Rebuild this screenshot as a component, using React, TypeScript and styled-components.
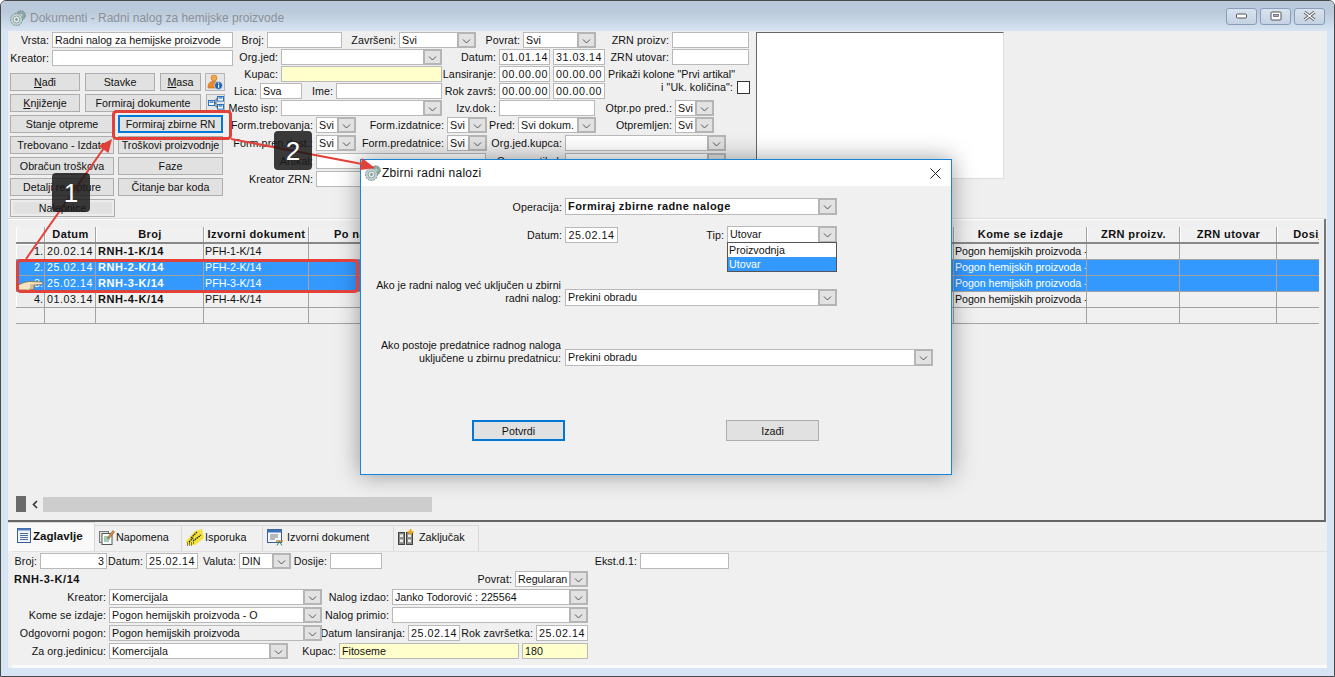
import React from 'react';
import styled, { createGlobalStyle } from 'styled-components';

const Global = createGlobalStyle`
  html, body { margin: 0; padding: 0; background: #fff; }
  body { font-family: "Liberation Sans", Arial, sans-serif; font-size: 10.7px; color: #111; }
`;

const Win = styled.div`
  position: relative; width: 1335px; height: 677px; box-sizing: border-box; overflow: hidden;
  border: 1px solid #4a4a4a; border-radius: 6px 6px 0 0;
  background: #d6e4f3; display: flex; flex-direction: column;
`;
const TitleBar = styled.div`
  height: 30px; flex: none; display: flex; align-items: center; padding: 4px 9px 0 9px; box-sizing: border-box;
  background: linear-gradient(#b9c9da, #bccbdb 40%, #d6e4f3);
`;
const TitleText = styled.span`
  margin-left: 4px; font-size: 12px; color: #8b9098;
`;
const WinBtns = styled.div`margin-left: auto; display: flex; gap: 3px; margin-top: -4px;`;
const WinBtn = styled.div`
  width: 31px; height: 17px; box-sizing: border-box; border: 1px solid #8a9cb8; border-radius: 3px;
  background: linear-gradient(#d9e3ef, #c4d2e3); display: flex; align-items: center; justify-content: center;
`;
const Body = styled.div`
  flex: 1; margin: 0 7px 8px 7px; display: flex; flex-direction: column; background: #efefef; min-height: 0;
`;
const Filters = styled.div`height: 187px; flex: none; display: flex; box-sizing: border-box; padding-top: 1px;`;
const LeftCol = styled.div`width: 220px; flex: none; display: flex; flex-direction: column;`;
const MidCol = styled.div`width: 528px; flex: none; display: flex; flex-direction: column;`;
const Row = styled.div<{ $mt?: number; $h?: number; $end?: boolean }>`
  display: flex; align-items: ${p => (p.$end ? 'flex-end' : 'center')}; height: ${p => p.$h ?? 16}px; flex: none;
  margin-top: ${p => p.$mt ?? 0}px;
`;
const Lbl = styled.div<{ $w: number; $left?: boolean; $lift?: number }>`
  width: ${p => p.$w}px; flex: none; box-sizing: border-box; white-space: nowrap;
  padding-right: ${p => (p.$left ? 0 : 3)}px;
  display: flex; justify-content: ${p => (p.$left ? 'flex-start' : 'flex-end')};
  margin-top: ${p => (p.$lift ? -p.$lift : 0)}px; letter-spacing: ${p => (p.$left ? 0 : 0.08)}px;
`;
const Field = styled.div<{ $w: number; $bg?: string; $right?: boolean; $date?: boolean }>`
  width: ${p => p.$w}px; height: 16px; flex: none; box-sizing: border-box; border: 1px solid #b9b9b9;
  background: ${p => p.$bg ?? '#fff'}; padding: 0 2px; line-height: 14px; white-space: nowrap; overflow: hidden;
  text-align: ${p => (p.$right ? 'right' : p.$date ? 'center' : 'left')};
  letter-spacing: ${p => (p.$date ? '0.55px' : '0')};
`;
const Gap = styled.div<{ $w: number }>`width: ${p => p.$w}px; flex: none;`;
const ComboBox = styled.div<{ $w: number; $h?: number; $bg?: string; $bold?: boolean }>`
  position: relative; width: ${p => p.$w}px; height: ${p => p.$h ?? 16}px; flex: none; box-sizing: border-box;
  display: flex; border: 1px solid #b9b9b9; background: ${p => p.$bg ?? '#fff'};
  font-weight: ${p => (p.$bold ? 700 : 400)}; font-size: ${p => (p.$bold ? 11 : 10.7)}px;
  letter-spacing: ${p => (p.$bold ? 0.42 : 0)}px;
`;
const ComboText = styled.div`flex: 1; min-width: 0; padding: 0 2px; white-space: nowrap; overflow: hidden; line-height: 14px;`;
const ComboBtn = styled.div`
  width: 19px; flex: none; margin: -1px; box-sizing: border-box; border: 2px solid #b5b5b5; background: #e2e2e2;
  display: flex; align-items: center; justify-content: center; padding-top: 2px;
`;
const Popup = styled.div`
  position: absolute; left: -1px; right: -1px; top: 100%; background: #fff; border: 1px solid #555;
  box-sizing: border-box; height: 30px; z-index: 2;
`;
const PopItem = styled.div<{ $sel?: boolean }>`
  height: 14px; line-height: 14px; padding: 0 1px; background: ${p => (p.$sel ? '#3399ff' : '#fff')};
  color: ${p => (p.$sel ? '#fff' : '#111')};
`;
const BtnArea = styled.div`display: flex; flex-direction: column; gap: 3px; margin: 7px 0 0 2px;`;
const BtnRow = styled.div`display: flex; align-items: center;`;
const Btn = styled.div<{ $w: number; $h?: number; $focus?: boolean; $ml?: number; $inner?: boolean }>`
  width: ${p => p.$w}px; height: ${p => p.$h ?? 18}px; flex: none; box-sizing: border-box;
  margin-left: ${p => p.$ml ?? 0}px;
  border: ${p => (p.$focus ? '2px solid #0078d7' : '1px solid #adadad')}; background: #e1e1e1;
  box-shadow: ${p => (p.$inner ? 'inset 0 0 0 2px #ececec' : 'none')};
  display: flex; align-items: center; justify-content: center; white-space: nowrap; overflow: hidden;
`;
const IconBtn = styled.div<{ $w: number; $ml: number }>`
  width: ${p => p.$w}px; height: 18px; margin-left: ${p => p.$ml}px; box-sizing: border-box; flex: none;
  border: 1px solid #b5b5b5; background: #e6e6e6; display: flex; align-items: center; justify-content: center;
`;
const Preview = styled.div`
  width: 248px; height: 147px; flex: none; box-sizing: border-box; background: #fff;
  border-top: 1px solid #666; border-left: 1px solid #666; border-right: 1px solid #ddd; border-bottom: 1px solid #ddd;
`;
const Check = styled.div`
  width: 13px; height: 13px; box-sizing: border-box; border: 1px solid #333; background: #fff; flex: none; margin-top: -8px; margin-left: 1px;
`;
const GridPanel = styled.div`
  flex: 1; min-height: 0; display: flex; flex-direction: column; box-sizing: border-box; padding: 8px;
  border-top: 1px solid #dcdcdc; border-bottom: 2px solid #666; box-shadow: inset -2px 0 0 #777, inset 0 1px 0 #fff;
  margin-right: 1px;
`;
const GridClip = styled.div`width: 1303px; overflow: hidden; flex: none; position: relative;`;
const cols = [29, 51, 108, 105, 128, 517, 133, 93, 97, 68];
const GridRowBox = styled.div<{ $sel?: boolean; $head?: boolean }>`
  display: grid; grid-template-columns: ${cols.map(c => c + 'px').join(' ')}; width: 1329px;
  height: ${p => (p.$head ? 17 : 16)}px; box-sizing: border-box;
  border-bottom: ${p => (p.$head ? '2px solid #888' : '1px solid #a3a3a3')};
  background: ${p => (p.$sel ? '#3399ff' : '#f0f0f0')}; color: ${p => (p.$sel ? '#fff' : '#111')};
`;
const HeadCell = styled.div`
  border-right: 1px solid #a3a3a3; border-left: 1px solid #fff; text-align: center; font-weight: 700; line-height: 15px;
  white-space: nowrap; overflow: hidden; font-size: 11px; letter-spacing: 0.42px;
`;
const Cell = styled.div<{ $bold?: boolean; $date?: boolean; $pad?: number; $tight?: boolean }>`
  border-right: 1px solid #a3a3a3; line-height: 15px; padding-left: ${p => p.$pad ?? 1}px; white-space: nowrap; overflow: hidden;
  font-weight: ${p => (p.$bold ? 700 : 400)}; font-size: ${p => (p.$bold ? 11 : 10.7)}px;
  letter-spacing: ${p => (p.$date || p.$bold ? '0.55px' : p.$tight ? '-0.06px' : '0')};
`;
const IndexCell = styled(Cell)<{ $sel?: boolean }>`
  text-align: right; padding-right: 1px; background: ${p => (p.$sel ? '#3399ff' : '#ececec')}; box-shadow: inset 1px 1px 0 ${p => (p.$sel ? '#3399ff' : '#fff')};
`;
const Hand = styled.svg`position: absolute; left: 1px; top: 53px;`;
const Scroll = styled.div`display: flex; align-items: center; margin-top: auto; height: 16px; flex: none;`;
const ScrollStop = styled.div`width: 10px; height: 16px; background: #6a6a6a; flex: none;`;
const ScrollArrow = styled.div`width: 17px; display: flex; justify-content: center; flex: none;`;
const ScrollThumb = styled.div`width: 389px; height: 15px; background: #cdcdcd; flex: none;`;
const Details = styled.div`height: 146px; flex: none; display: flex; flex-direction: column;`;
const Tabs = styled.div`display: flex; height: 29px; flex: none; align-items: flex-end;`;
const Tab = styled.div<{ $w: number; $active?: boolean }>`
  width: ${p => p.$w}px; flex: none; box-sizing: border-box; height: ${p => (p.$active ? 29 : 26)}px;
  background: ${p => (p.$active ? '#f9f9f9' : '#f0f0f0')};
  border-right: 1px solid #d9d9d9; border-top: 1px solid #d9d9d9;
  display: flex; align-items: center; gap: 1px; padding-left: ${p => (p.$active ? 8 : 4)}px;
  font-weight: ${p => (p.$active ? 700 : 400)}; font-size: ${p => (p.$active ? 11.6 : 10.8)}px;
  padding-bottom: ${p => (p.$active ? 4 : 3)}px;
`;
const TabLabel = styled.span<{ $nudge?: number }>`margin-left: ${p => p.$nudge ?? 0}px;`;
const Pane = styled.div`
  flex: 1; margin-left: 4px; padding-top: 1px; box-sizing: border-box; background: #f0f0f0;
  border-top: 1px solid #e0e0e0; border-bottom: 3px solid #fafafa; display: flex; flex-direction: column; gap: 2px;
`;
const Strong = styled.div<{ $w: number }>`width: ${p => p.$w}px; padding-left: 2px; box-sizing: border-box; font-weight: 700; font-size: 11px; flex: none; letter-spacing: 0.55px;`;

const Dialog = styled.div`
  position: absolute; left: 359px; top: 158px; width: 592px; height: 316px; box-sizing: border-box;
  border: 1px solid #1883d7; background: #f0f0f0; box-shadow: 0 0 22px rgba(0,0,0,0.38); z-index: 3;
  display: flex; flex-direction: column;
`;
const DlgTitle = styled.div`
  height: 26px; flex: none; background: #fff; display: flex; align-items: center; padding: 0 10px 0 4px; font-size: 12px; letter-spacing: 0.25px;
`;
const DlgTitleText = styled.span`margin-left: 1px; color: #111;`;
const DlgClose = styled.svg`margin-left: auto;`;
const DlgBody = styled.div`display: flex; flex-direction: column;`;
const Multi = styled.div<{ $w: number }>`
  width: ${p => p.$w}px; flex: none; text-align: right; padding-right: 4px; box-sizing: border-box; line-height: 13px; margin-bottom: 1px;
`;
const DlgButtons = styled.div`display: flex; margin: 54px 0 0 111px; gap: 161px;`;
const Overlay = styled.svg`position: absolute; left: -1px; top: -1px; z-index: 4; pointer-events: none;`;
const Badge = styled.div<{ $x: number; $y: number }>`
  position: absolute; left: ${p => p.$x}px; top: ${p => p.$y}px; width: 38px; height: 39px; border-radius: 4px;
  background: rgba(25,25,25,0.85); color: #fff; font-size: 26px; display: flex; align-items: center; justify-content: center;
  z-index: 5; padding-top: 2px; box-sizing: border-box;
`;

const Chevron = () => (
  <svg width="9" height="5" viewBox="0 0 9 5"><path d="M1 0.5 L4.5 4 L8 0.5" fill="none" stroke="#555" strokeWidth="1" /></svg>
);
const Combo: React.FC<{ w: number; text?: string; h?: number; bg?: string; bold?: boolean; children?: React.ReactNode }> = ({ w, text, h, bg, bold, children }) => (
  <ComboBox $w={w} $h={h} $bg={bg} $bold={bold}>
    <ComboText>{text}</ComboText>
    <ComboBtn><Chevron /></ComboBtn>
    {children}
  </ComboBox>
);

const Gear: React.FC<{ s?: number }> = ({ s = 16 }) => (
  <svg width={s} height={s} viewBox="0 0 16 16">
    <circle cx="10.8" cy="5.4" r="4.6" fill="#8fa9a5" stroke="#6c8582" strokeDasharray="1.6 0.9" />
    <circle cx="10.8" cy="5.4" r="1.5" fill="#dfe8e6" />
    <circle cx="6.5" cy="9.5" r="6" fill="#c3d1cf" stroke="#6f8a87" strokeDasharray="1.8 1" />
    <circle cx="6.5" cy="9.5" r="3.4" fill="#e6eeec" stroke="#91a7a4" />
    <circle cx="6.5" cy="9.5" r="1.4" fill="#7f9a96" />
  </svg>
);
const PersonInfo = () => (
  <svg width="16" height="16" viewBox="0 0 16 16">
    <circle cx="7" cy="4" r="3" fill="#f0a848" stroke="#c4711d" strokeWidth="0.6" />
    <path d="M1 14 C1 8 4 7.5 7 7.5 C10 7.5 12 9 12 14 Z" fill="#ea8a2a" stroke="#b9651a" strokeWidth="0.6" />
    <circle cx="11.5" cy="11.5" r="4" fill="#1c62b8" stroke="#fff" strokeWidth="0.6" />
    <rect x="11" y="10.6" width="1.2" height="3.2" fill="#fff" />
    <rect x="11" y="8.8" width="1.2" height="1.1" fill="#fff" />
  </svg>
);
const TreeIcon = () => (
  <svg width="16" height="14" viewBox="0 0 16 14">
    <rect x="0.5" y="4.5" width="6" height="5" fill="#fff" stroke="#2a71c0" />
    <rect x="1.5" y="5.5" width="4" height="1.4" fill="#2a71c0" />
    <rect x="9.5" y="0.5" width="6" height="4.6" fill="#fff" stroke="#2a71c0" />
    <rect x="10.5" y="1.3" width="4" height="1.3" fill="#2a71c0" />
    <rect x="9.5" y="8.5" width="6" height="4.6" fill="#fff" stroke="#2a71c0" />
    <rect x="10.5" y="9.3" width="4" height="1.3" fill="#2a71c0" />
    <path d="M6.5 7 H8 V3 H9.5 M8 7 V11 H9.5" fill="none" stroke="#444" strokeWidth="0.8" />
  </svg>
);
const TabDoc = () => (
  <svg width="16" height="17" viewBox="0 0 16 17">
    <rect x="1.5" y="1.5" width="13" height="14" fill="#eef3fa" stroke="#3d5f95" />
    <rect x="1.5" y="1.5" width="13" height="2" fill="#4f7cbd" />
    <path d="M4 6.5 H12 M4 8.5 H12 M4 10.5 H12 M4 12.5 H12" stroke="#3d5f95" strokeWidth="0.9" />
  </svg>
);
const TabNote = () => (
  <svg width="16" height="17" viewBox="0 0 16 17">
    <rect x="0.5" y="2.5" width="9" height="11" fill="#e0e0e0" stroke="#777" />
    <rect x="3" y="4.5" width="10" height="11" fill="#fff" stroke="#555" />
    <path d="M5 8 H11 M5 10 H11 M5 12 H10" stroke="#3b9a6a" />
    <path d="M9 8 L14 1.5 L15.5 3 L10.5 9 L8.6 9.6 Z" fill="#e58a35" stroke="#7a5a3a" strokeWidth="0.6" />
  </svg>
);
const TabDelivery = () => (
  <svg width="18" height="17" viewBox="0 0 18 17">
    <path d="M0 12 L9 2 L16 0 L18 9 L9 16 L1 16 Z" fill="#f2e23a" />
    <path d="M5 9 L11 3 M7 12 L15 6 M3 13 L7 9" stroke="#222" strokeWidth="1.4" strokeDasharray="1.5 0.8" />
    <path d="M1 14 H8 M1 16 H6" stroke="#222" strokeWidth="1" strokeDasharray="1 1" />
  </svg>
);
const TabSource = () => (
  <svg width="17" height="17" viewBox="0 0 17 17">
    <rect x="0.5" y="0.5" width="14" height="13" fill="#f3f6fb" stroke="#3c5f90" />
    <rect x="0.5" y="0.5" width="14" height="3" fill="#3f72b5" />
    <path d="M3 6 H11 M3 8 H11 M3 10 H8" stroke="#7a7a7a" />
    <path d="M9 12 H16" stroke="#c9822f" strokeWidth="1.4" />
    <path d="M10 16.5 L12.5 12.5 L15 16.5" fill="none" stroke="#2d8a5a" />
  </svg>
);
const TabClose = () => (
  <svg width="16" height="17" viewBox="0 0 16 17">
    <rect x="0.5" y="3.5" width="6" height="12" fill="#8a8a86" stroke="#444" />
    <rect x="8.5" y="3.5" width="6" height="12" fill="#8a8a86" stroke="#444" />
    <rect x="2" y="5.5" width="3" height="2.6" fill="#eee" />
    <rect x="2" y="10.5" width="3" height="2.6" fill="#eee" />
    <rect x="10" y="5.5" width="3" height="2.6" fill="#eee" />
    <rect x="10" y="10.5" width="3" height="2.6" fill="#eee" />
    <path d="M12.5 0 V6 M9.5 3 H15.5" stroke="#e7a91f" strokeWidth="2" />
  </svg>
);

const data = [
  { n: '1.', d: '20.02.14', b: 'RNH-1-K/14', i: 'PFH-1-K/14' },
  { n: '2.', d: '25.02.14', b: 'RNH-2-K/14', i: 'PFH-2-K/14', sel: true },
  { n: '3.', d: '25.02.14', b: 'RNH-3-K/14', i: 'PFH-3-K/14', sel: true },
  { n: '4.', d: '01.03.14', b: 'RNH-4-K/14', i: 'PFH-4-K/14' },
];
const heads = ['', 'Datum', 'Broj', 'Izvorni dokument', 'Po narudžbini', '', 'Kome se izdaje', 'ZRN proizv.', 'ZRN utovar', 'Dosije'];

export default function App() {
  return (
    <Win>
      <Global />
      <TitleBar>
        <Gear />
        <TitleText>Dokumenti - Radni nalog za hemijske proizvode</TitleText>
        <WinBtns>
          <WinBtn>
            <svg width="12" height="6" viewBox="0 0 12 6"><rect x="0.5" y="1" width="10" height="4" rx="1" fill="#fff" stroke="#555" /></svg>
          </WinBtn>
          <WinBtn>
            <svg width="12" height="10" viewBox="0 0 12 10"><rect x="1" y="1" width="10" height="8" rx="1" fill="#fff" stroke="#555" /><rect x="3.5" y="3.5" width="5" height="2" fill="#aac" stroke="#555" strokeWidth="0.7" /></svg>
          </WinBtn>
          <WinBtn>
            <svg width="13" height="10" viewBox="0 0 13 10"><path d="M1.5 1 L11.5 9 M11.5 1 L1.5 9" stroke="#555" strokeWidth="3" /><path d="M1.5 1 L11.5 9 M11.5 1 L1.5 9" stroke="#fff" strokeWidth="1.4" /></svg>
          </WinBtn>
        </WinBtns>
      </TitleBar>
      <Body>
        <Filters>
          <LeftCol>
            <Row>
              <Lbl $w={44}>Vrsta:</Lbl>
              <Field $w={181}>Radni nalog za hemijske proizvode</Field>
            </Row>
            <Row $mt={2}>
              <Lbl $w={44}>Kreator:</Lbl>
              <Field $w={181} />
            </Row>
            <BtnArea>
              <BtnRow>
                <Btn $w={70}><span><u>N</u>ađi</span></Btn>
                <Btn $w={70} $ml={5}>Stavke</Btn>
                <Btn $w={41} $ml={5}><span><u>M</u>asa</span></Btn>
                <IconBtn $w={20} $ml={4}><PersonInfo /></IconBtn>
              </BtnRow>
              <BtnRow>
                <Btn $w={70}><span><u>K</u>njiženje</span></Btn>
                <Btn $w={116} $ml={5}>Formiraj dokumente</Btn>
                <IconBtn $w={19} $ml={5}><TreeIcon /></IconBtn>
              </BtnRow>
              <BtnRow>
                <Btn $w={104}>Stanje otpreme</Btn>
                <Btn $w={105} $ml={4} $focus>Formiraj zbirne RN</Btn>
              </BtnRow>
              <BtnRow>
                <Btn $w={104}>Trebovano - Izdato</Btn>
                <Btn $w={105} $ml={4}>Troškovi proizvodnje</Btn>
              </BtnRow>
              <BtnRow>
                <Btn $w={104}>Obračun troškova</Btn>
                <Btn $w={105} $ml={4}>Faze</Btn>
              </BtnRow>
              <BtnRow>
                <Btn $w={104}>Detalji recepture</Btn>
                <Btn $w={105} $ml={4}>Čitanje bar koda</Btn>
              </BtnRow>
              <BtnRow>
                <Btn $w={105} $inner>Nalepnice</Btn>
              </BtnRow>
            </BtnArea>
          </LeftCol>
          <MidCol>
            <Row>
              <Lbl $w={39}>Broj:</Lbl>
              <Field $w={75} />
              <Lbl $w={57}>Završeni:</Lbl>
              <Combo w={77} text="Svi" />
              <Lbl $w={47}>Povrat:</Lbl>
              <Combo w={73} text="Svi" />
              <Lbl $w={76}>ZRN proizv:</Lbl>
              <Field $w={77} />
            </Row>
            <Row $mt={1}>
              <Lbl $w={53}>Org.jed:</Lbl>
              <Combo w={161} />
              <Lbl $w={57}>Datum:</Lbl>
              <Field $w={51} $date>01.01.14</Field>
              <Gap $w={3} />
              <Field $w={52} $date>31.03.14</Field>
              <Lbl $w={67}>ZRN utovar:</Lbl>
              <Field $w={77} />
            </Row>
            <Row $mt={1}>
              <Lbl $w={53}>Kupac:</Lbl>
              <Field $w={161} $bg="#ffffcc" />
              <Lbl $w={57}>Lansiranje:</Lbl>
              <Field $w={51} $date>00.00.00</Field>
              <Gap $w={3} />
              <Field $w={52} $date>00.00.00</Field>
              <Gap $w={3} />
              <Lbl $w={130} $left $lift={1}>Prikaži kolone "Prvi artikal"</Lbl>
            </Row>
            <Row $mt={1}>
              <Lbl $w={32}>Lica:</Lbl>
              <Field $w={42}>Sva</Field>
              <Lbl $w={34}>Ime:</Lbl>
              <Field $w={106} />
              <Lbl $w={57}>Rok završ:</Lbl>
              <Field $w={51} $date>00.00.00</Field>
              <Gap $w={3} />
              <Field $w={52} $date>00.00.00</Field>
              <Lbl $w={131} $lift={8}>i "Uk. količina":</Lbl>
              <Check />
            </Row>
            <Row $mt={1}>
              <Lbl $w={53}>Mesto isp:</Lbl>
              <Combo w={161} />
              <Lbl $w={57}>Izv.dok.:</Lbl>
              <Field $w={96} />
              <Lbl $w={80}>Otpr.po pred.:</Lbl>
              <Combo w={39} text="Svi" />
            </Row>
            <Row $mt={1}>
              <Lbl $w={88}>Form.trebovanja:</Lbl>
              <Combo w={40} text="Svi" />
              <Lbl $w={91}>Form.izdatnice:</Lbl>
              <Combo w={40} text="Svi" />
              <Lbl $w={31}>Pred:</Lbl>
              <Combo w={78} text="Svi dokum." />
              <Lbl $w={79}>Otpremljen:</Lbl>
              <Combo w={39} text="Svi" />
            </Row>
            <Row $mt={2}>
              <Lbl $w={88}>Form.pren.dost.:</Lbl>
              <Combo w={40} text="Svi" />
              <Lbl $w={91}>Form.predatnice:</Lbl>
              <Combo w={40} text="Svi" />
              <Lbl $w={78}>Org.jed.kupca:</Lbl>
              <Combo w={161} />
            </Row>
            <Row $mt={2}>
              <Lbl $w={88}>Artikal:</Lbl>
              <Field $w={170} />
              <Lbl $w={79}>Grupa artikal:</Lbl>
              <Combo w={161} />
            </Row>
            <Row $mt={2}>
              <Lbl $w={88}>Kreator ZRN:</Lbl>
              <Field $w={100} />
            </Row>
          </MidCol>
          <Preview />
        </Filters>
        <GridPanel>
          <GridClip>
            <GridRowBox $head>
              {heads.map((h, i) => <HeadCell key={i}>{h}</HeadCell>)}
            </GridRowBox>
            {data.map(r => (
              <GridRowBox key={r.n} $sel={r.sel}>
                <IndexCell $sel={r.sel}>{r.n}</IndexCell>
                <Cell $date $pad={2}>{r.d}</Cell>
                <Cell $bold $pad={2}>{r.b}</Cell>
                <Cell>{r.i}</Cell>
                <Cell />
                <Cell />
                <Cell $tight>Pogon hemijskih proizvoda - O</Cell>
                <Cell />
                <Cell />
                <Cell />
              </GridRowBox>
            ))}
            <GridRowBox>
              {cols.map((_, i) => <Cell key={i} />)}
            </GridRowBox>
            <Hand width="27" height="11" viewBox="0 0 27 11">
              <path d="M1 5 L7 2.5 L12 1.5 L25 2 Q27 3 25 4.5 L17 5 L17 9 Q12 11 7 10 L1 10 Z" fill="#f3e4c4" stroke="#8a6a3c" strokeWidth="0.8" />
              <path d="M13 5 H17 M13 7 H17 M12 9 H16" stroke="#8a6a3c" strokeWidth="0.6" />
            </Hand>
          </GridClip>
          <Scroll>
            <ScrollStop />
            <ScrollArrow>
              <svg width="6" height="9" viewBox="0 0 6 9"><path d="M5 1 L1.5 4.5 L5 8" fill="none" stroke="#333" strokeWidth="1.6" /></svg>
            </ScrollArrow>
            <ScrollThumb />
          </Scroll>
        </GridPanel>
        <Details>
          <Tabs>
            <Tab $w={87} $active><TabDoc /><TabLabel>Zaglavlje</TabLabel></Tab>
            <Tab $w={87}><TabNote /><TabLabel>Napomena</TabLabel></Tab>
            <Tab $w={81}><TabDelivery /><TabLabel>Isporuka</TabLabel></Tab>
            <Tab $w={131}><TabSource /><TabLabel $nudge={2}>Izvorni dokument</TabLabel></Tab>
            <Tab $w={85}><TabClose /><TabLabel $nudge={4}>Zaključak</TabLabel></Tab>
          </Tabs>
          <Pane>
            <Row>
              <Lbl $w={28}>Broj:</Lbl>
              <Field $w={67} $right>3</Field>
              <Lbl $w={39}>Datum:</Lbl>
              <Field $w={52} $date>25.02.14</Field>
              <Lbl $w={41}>Valuta:</Lbl>
              <Combo w={52} text="DIN" />
              <Lbl $w={39}>Dosije:</Lbl>
              <Field $w={52} />
              <Lbl $w={258}>Ekst.d.1:</Lbl>
              <Field $w={89} />
            </Row>
            <Row>
              <Strong $w={150}>RNH-3-K/14</Strong>
              <Lbl $w={353}>Povrat:</Lbl>
              <Combo w={73} text="Regularan" />
            </Row>
            <Row>
              <Lbl $w={97}>Kreator:</Lbl>
              <Combo w={213} text="Komercijala" />
              <Lbl $w={70}>Nalog izdao:</Lbl>
              <Combo w={196} text="Janko Todorović : 225564" />
            </Row>
            <Row>
              <Lbl $w={97}>Kome se izdaje:</Lbl>
              <Combo w={213} text="Pogon hemijskih proizvoda - O" />
              <Lbl $w={70}>Nalog primio:</Lbl>
              <Combo w={196} />
            </Row>
            <Row>
              <Lbl $w={97}>Odgovorni pogon:</Lbl>
              <Combo w={213} text="Pogon hemijskih proizvoda" bg="#f0f0f0" />
              <Lbl $w={86}>Datum lansiranja:</Lbl>
              <Field $w={52} $date>25.02.14</Field>
              <Lbl $w={76}>Rok završetka:</Lbl>
              <Field $w={52} $date>25.02.14</Field>
            </Row>
            <Row>
              <Lbl $w={97}>Za org.jedinicu:</Lbl>
              <Combo w={179} text="Komercijala" />
              <Lbl $w={51}>Kupac:</Lbl>
              <Field $w={180} $bg="#ffffcc">Fitoseme</Field>
              <Gap $w={3} />
              <Field $w={66} $bg="#ffffcc">180</Field>
            </Row>
          </Pane>
        </Details>
      </Body>

      <Dialog>
        <DlgTitle>
          <Gear />
          <DlgTitleText>Zbirni radni nalozi</DlgTitleText>
          <DlgClose width="11" height="11" viewBox="0 0 11 11"><path d="M0.5 0.5 L10.5 10.5 M10.5 0.5 L0.5 10.5" stroke="#222" strokeWidth="1" /></DlgClose>
        </DlgTitle>
        <DlgBody>
          <Row $mt={12} $h={17}>
            <Lbl $w={204}>Operacija:</Lbl>
            <Combo w={272} h={17} text="Formiraj zbirne radne naloge" bold />
          </Row>
          <Row $mt={11} $h={17}>
            <Lbl $w={204}>Datum:</Lbl>
            <Field $w={53} $date>25.02.14</Field>
            <Lbl $w={109}>Tip:</Lbl>
            <Combo w={110} h={17} text="Utovar">
              <Popup>
                <PopItem>Proizvodnja</PopItem>
                <PopItem $sel>Utovar</PopItem>
              </Popup>
            </Combo>
          </Row>
          <Row $mt={35} $h={28} $end>
            <Multi $w={204}>Ako je radni nalog već uključen u zbirni<br />radni nalog:</Multi>
            <Combo w={272} h={17} text="Prekini obradu" />
          </Row>
          <Row $mt={32} $h={28} $end>
            <Multi $w={204}>Ako postoje predatnice radnog naloga<br />uključene u zbirnu predatnicu:</Multi>
            <Combo w={368} h={17} text="Prekini obradu" />
          </Row>
          <DlgButtons>
            <Btn $w={93} $h={21} $focus>Potvrdi</Btn>
            <Btn $w={93} $h={21}>Izađi</Btn>
          </DlgButtons>
        </DlgBody>
      </Dialog>

      <Overlay width="1335" height="677" viewBox="0 0 1335 677">
        <rect x="113.5" y="111.5" width="117" height="27" rx="3" fill="none" stroke="#e2413a" strokeWidth="3" />
        <rect x="17.5" y="260.5" width="340" height="31" rx="3" fill="none" stroke="#e2413a" strokeWidth="3" />
        <path d="M26 259 L104 148" stroke="#e2413a" strokeWidth="2" fill="none" />
        <path d="M112 139 L108.5 153 L98.5 146 Z" fill="#e2413a" />
        <path d="M231 139 L362 164" stroke="#e2413a" strokeWidth="2" fill="none" />
        <path d="M375 168 L360 170 L362 158 Z" fill="#e2413a" />
      </Overlay>
      <Badge $x={51} $y={172}>1</Badge>
      <Badge $x={273} $y={130}>2</Badge>
    </Win>
  );
}
